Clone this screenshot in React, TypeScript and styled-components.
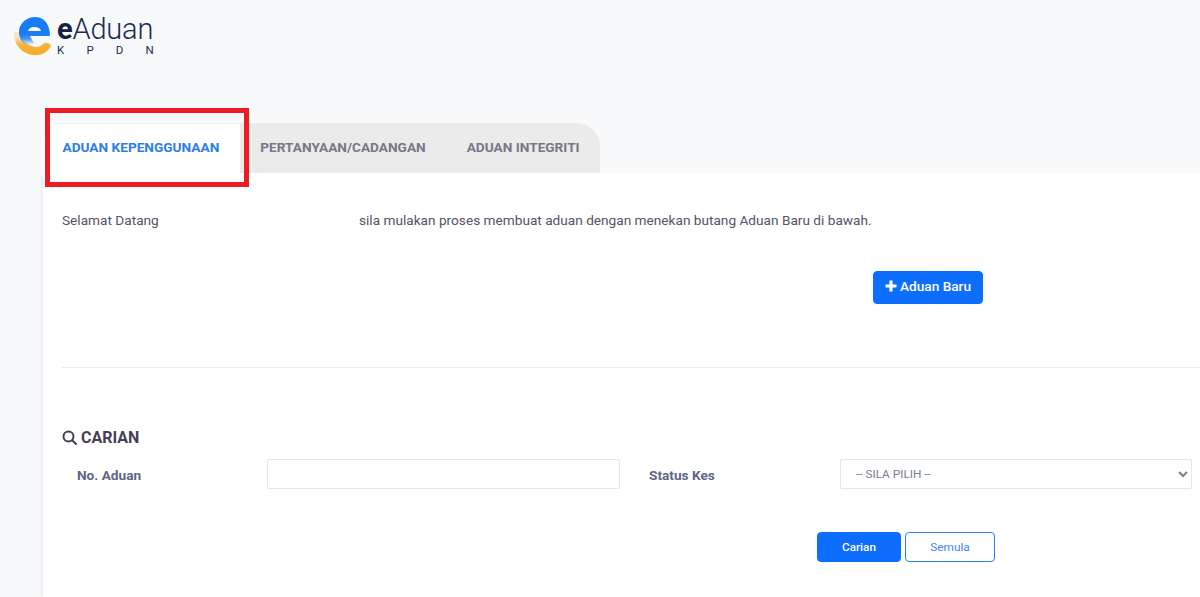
import styled, { createGlobalStyle } from "styled-components";

const GlobalStyle = createGlobalStyle`
  html, body {
    margin: 0;
    padding: 0;
    height: 100%;
    overflow: hidden;
    background: #f8f9fb;
    font-family: Roboto, "Liberation Sans", sans-serif;
    color: #4f4a5f;
  }
  * {
    box-sizing: border-box;
  }
`;

const Page = styled.div`
  width: 1200px;
  height: 597px;
  overflow: hidden;
  padding-left: 43px;
`;
const Brand = styled.header`
  height: 123px;
  margin-left: -43px;
  padding: 15px 0 0 13px;
  display: flex;
  align-items: flex-start;
  gap: 4px;
`;
const BrandText = styled.div`
  display: flex;
  flex-direction: column;
  color: #1b2a52;
`;
const BrandName = styled.div`
  font-size: 29px;
  line-height: 29px;
  font-weight: 300;
  letter-spacing: -0.2px;
  b {
    font-weight: 700;
    color: #16233f;
  }
`;
const BrandSub = styled.div`
  font-size: 11.5px;
  line-height: 13px;
  letter-spacing: 22.2px;
  margin: 0;
  white-space: nowrap;
`;
const TabBar = styled.nav`
  height: 50px;
  width: 557px;
  display: flex;
  background: #ebebeb;
  border-radius: 16px 24px 0 0;
`;
const Tab = styled.div<{ $active?: boolean }>`
  display: flex;
  align-items: center;
  height: 50px;
  padding: 0 20.5px 2px;
  font-size: 13.65px;
  font-weight: 700;
  white-space: nowrap;
  color: ${(p) => (p.$active ? "#2f7de1" : "#7b7688")};
  background: ${(p) => (p.$active ? "#fff" : "transparent")};
  border-radius: ${(p) => (p.$active ? "16px 0 0 0" : "0")};
  ${(p) =>
    p.$active &&
    "width: 197.5px; padding-left: 19.5px; padding-bottom: 3px; border-top: 1px solid #eef0f2;"}
`;
const Highlight = styled.div`
  position: absolute;
  left: 45px;
  top: 108px;
  width: 204px;
  height: 79px;
  border: 5px solid #ed1c24;
`;
const Card = styled.main`
  height: 424px;
  background: #fff;
  box-shadow: -3px 0 3px -2px rgba(40, 50, 80, 0.1);
  padding: 39px 0 0 19px;
`;
const Intro = styled.div`
  display: flex;
  font-size: 13.65px;
  line-height: 17px;
  color: #57526a;
`;
const IntroLabel = styled.span`
  width: 297px;
  flex: none;
`;
const NewRow = styled.div`
  display: flex;
  padding: 42px 0 0 811px;
`;
const PrimaryButton = styled.button`
  display: inline-flex;
  align-items: center;
  justify-content: center;
  gap: 3px;
  border: 1px solid #0d6efd;
  border-radius: 4px;
  background: #0d6efd;
  color: #fff;
  font-family: inherit;
  font-weight: 500;
  padding: 0;
`;
const NewButton = styled(PrimaryButton)`
  width: 110px;
  height: 33px;
  padding-bottom: 3px;
  font-size: 13.65px;
`;
const Divider = styled.hr`
  margin: 63px 0 0;
  border: 0;
  border-top: 1px solid #e9ebee;
`;
const SearchTitle = styled.h2`
  display: flex;
  align-items: center;
  gap: 4px;
  margin: 60px 0 0;
  font-size: 16px;
  line-height: 19px;
  font-weight: 700;
  color: #443f55;
`;
const FormRow = styled.div`
  display: flex;
  align-items: center;
  margin-top: 12px;
`;
const FieldLabel = styled.label<{ $width: number }>`
  flex: none;
  width: ${(p) => p.$width}px;
  padding-top: 1px;
  font-size: 13.65px;
  font-weight: 700;
  color: #5d6785;
`;
const NoLabel = styled(FieldLabel)`
  padding-left: 15px;
`;
const StatusLabel = styled(FieldLabel)`
  padding-left: 29px;
`;
const TextInput = styled.input`
  width: 353px;
  height: 30px;
  border: 1px solid #e4e6ea;
  border-radius: 2px;
  background: #fff;
  flex: none;
`;
const Select = styled.select`
  width: 352px;
  height: 30px;
  flex: none;
  border: 1px solid #e4e6ea;
  border-radius: 2px;
  background: #fff;
  padding: 0 11px;
  font-family: inherit;
  font-size: 11.8px;
  color: #7a8090;
`;
const Actions = styled.div`
  display: flex;
  gap: 4px;
  padding: 43px 0 0 755px;
`;
const SearchButton = styled(PrimaryButton)`
  width: 84px;
  height: 30px;
  font-size: 11.7px;
`;
const ResetButton = styled.button`
  width: 90px;
  height: 30px;
  border: 1px solid #2b80f5;
  border-radius: 4px;
  background: #fff;
  color: #3b86f0;
  font-family: inherit;
  font-size: 11.8px;
  padding: 0;
`;

function LogoMark() {
  return (
    <svg width="40" height="41" viewBox="0 0 40 41" style={{ flex: "none" }}>
      <defs>
        <linearGradient id="ring" x1="0.3" y1="1" x2="0.3" y2="0.2">
          <stop offset="0" stopColor="#f5a91f" />
          <stop offset="0.6" stopColor="#f6b445" />
          <stop offset="1" stopColor="#f8d79c" stopOpacity="0.55" />
        </linearGradient>
        <linearGradient id="mark" x1="0.3" y1="1" x2="0.3" y2="0">
          <stop offset="0" stopColor="#1a7cf2" stopOpacity="0" />
          <stop offset="0.22" stopColor="#1a7cf2" stopOpacity="0.8" />
          <stop offset="0.38" stopColor="#1a7cf2" />
          <stop offset="1" stopColor="#1a7cf2" />
        </linearGradient>
      </defs>
      <path
        d="M1 17 C1 32 11 40 23 40 C31 40 36 35 38 31 C36 27 33 27 30 29 C27 32 23 33 19 31 C12 29 7 24 6 17 Z"
        fill="url(#ring)"
      />
      <path
        d="M6 17 C6 9 13 2 22 2 C31 2 37 9 37 21 L17 21 C18 24 20 26 22 29 L13 30 C8 27 6 22 6 17 Z M15 16 L28 16 C27 13 25 12 21.5 12 C18 12 16 13 15 16 Z"
        fill="url(#mark)"
        fillRule="evenodd"
      />
    </svg>
  );
}

function PlusIcon() {
  return (
    <svg width="12" height="12" viewBox="0 0 12 12">
      <path d="M4.4 0.5h3.2v3.9h3.9v3.2H7.6v3.9H4.4V7.6H0.5V4.4h3.9z" fill="#fff" />
    </svg>
  );
}

function SearchIcon() {
  return (
    <svg width="15" height="15" viewBox="0 0 15 15" fill="none" stroke="#443f55" strokeWidth="2">
      <circle cx="6.5" cy="6.5" r="5" />
      <path d="M10.2 10.2 14 14" strokeLinecap="round" />
    </svg>
  );
}

export default function App() {
  return (
    <>
      <GlobalStyle />
      <Page>
        <Brand>
          <LogoMark />
          <BrandText>
            <BrandName>
              <b>e</b>Aduan
            </BrandName>
            <BrandSub>KPDN</BrandSub>
          </BrandText>
        </Brand>
        <TabBar>
          <Tab $active>ADUAN KEPENGGUNAAN</Tab>
          <Tab>PERTANYAAN/CADANGAN</Tab>
          <Tab>ADUAN INTEGRITI</Tab>
        </TabBar>
        <Card>
          <Intro>
            <IntroLabel>Selamat Datang</IntroLabel>
            <span>sila mulakan proses membuat aduan dengan menekan butang Aduan Baru di bawah.</span>
          </Intro>
          <NewRow>
            <NewButton>
              <PlusIcon />
              Aduan Baru
            </NewButton>
          </NewRow>
          <Divider />
          <SearchTitle>
            <SearchIcon />
            CARIAN
          </SearchTitle>
          <FormRow>
            <NoLabel $width={205}>No. Aduan</NoLabel>
            <TextInput />
            <StatusLabel $width={220}>Status Kes</StatusLabel>
            <Select defaultValue="">
              <option value="">-- SILA PILIH --</option>
            </Select>
          </FormRow>
          <Actions>
            <SearchButton>Carian</SearchButton>
            <ResetButton>Semula</ResetButton>
          </Actions>
        </Card>
      </Page>
      <Highlight />
    </>
  );
}
